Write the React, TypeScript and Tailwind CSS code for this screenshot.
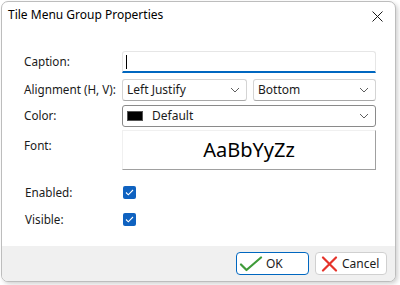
import React from 'react';

const font = { fontFamily: '"Noto Sans", "Open Sans", sans-serif' };

function Chevron() {
  return (
    <svg width="10" height="6" viewBox="0 0 10 6" className="shrink-0">
      <path d="M1 1l4 4 4-4" fill="none" stroke="#5f5f5f" strokeWidth="1" />
    </svg>
  );
}

function Select({ children, className = '' }: { children: React.ReactNode; className?: string }) {
  return (
    <div
      className={`flex h-[22px] items-center justify-between rounded-[3px] border border-[#d4d4d4] border-b-[#a8a8a8] bg-white pl-[4px] pr-[6px] ${className}`}
    >
      <span className="flex items-center">{children}</span>
      <Chevron />
    </div>
  );
}

function Check() {
  return (
    <div className="flex h-[13px] w-[13px] items-center justify-center rounded-[2px] bg-[#0f62c0]">
      <svg width="9" height="7" viewBox="0 0 9 7">
        <path d="M1 3.5l2.3 2.3L8 1" fill="none" stroke="white" strokeWidth="1.1" />
      </svg>
    </div>
  );
}

function Row({ label, children, className = '' }: { label: string; children: React.ReactNode; className?: string }) {
  return (
    <div className={`flex items-center ${className}`}>
      <span className="w-[98px] shrink-0 text-[11.7px] text-[#1b1b1b]">{label}</span>
      {children}
    </div>
  );
}

export default function App() {
  return (
    <div className="h-[285px] w-[400px] overflow-hidden bg-white" style={font}>
      <div className="ml-[1px] mt-[1px] flex h-[281px] w-[395px] flex-col overflow-hidden rounded-[7px] border border-[#bdbdbd] bg-white shadow-[2px_2px_4px_rgba(0,0,0,0.18)]">
        {/* title bar */}
        <div className="flex h-[30px] items-start justify-between pl-[6px] pr-[8px] pt-[4px]">
          <span className="text-[12px] text-black">Tile Menu Group Properties</span>
          <svg width="11" height="11" viewBox="0 0 11 11" className="mr-[4px] mt-[5px]">
            <path d="M0.5 0.5l10 10M10.5 0.5l-10 10" stroke="#1a1a1a" strokeWidth="1" />
          </svg>
        </div>

        {/* body */}
        <div className="flex flex-1 flex-col pl-[22px] pr-[19px] pt-[19px]">
          <Row label="Caption:">
            <div className="flex h-[22px] flex-1 items-center rounded-t-[3px] border border-[#e6e6e6] border-b-2 border-b-[#0067c0] pl-[3px]">
              <div className="h-[14px] w-[1px] bg-black" />
            </div>
          </Row>
          <Row label="Alignment (H, V):" className="mt-[6px]">
            <Select className="w-[125px] text-[12px] text-[#1b1b1b]">Left Justify</Select>
            <Select className="ml-[6px] flex-1 text-[12px] text-[#1b1b1b]">Bottom</Select>
          </Row>
          <Row label="Color:" className="mt-[4px]">
            <div className="flex h-[22px] flex-1 items-center justify-between rounded-[3px] border border-[#8a8a8a] bg-white pl-[4px] pr-[6px]">
              <span className="flex items-center text-[12px] text-[#1b1b1b]">
                <span className="mr-[9px] h-[10px] w-[16px] border border-[#555] bg-black" />
                Default
              </span>
              <Chevron />
            </div>
          </Row>
          <div className="mt-[3px] flex items-start">
            <span className="mt-[7px] w-[98px] shrink-0 text-[11.7px] text-[#1b1b1b]">Font:</span>
            <div className="flex h-[40px] flex-1 items-center justify-center border border-[#f0f0f0] border-b-[#a0a0a0] border-r-[#a0a0a0] bg-white">
              <span className="text-[20px] text-black">AaBbYyZz</span>
            </div>
          </div>
          <Row label="Enabled:" className="ml-[1px] mt-[14px]">
            <Check />
          </Row>
          <Row label="Visible:" className="ml-[1px] mt-[9px]">
            <Check />
          </Row>
        </div>

        {/* footer */}
        <div className="flex h-[35px] items-start justify-end gap-[6px] bg-[#f0f0f0] pr-[8px] pt-[6px]">
          <button className="flex h-[23px] w-[73px] items-center rounded-[4px] border border-[#0067c0] bg-white pl-[2px] text-[12px] text-[#1b1b1b]">
            <svg width="24" height="16" viewBox="0 0 24 16" className="mr-[3px]">
              <path d="M2 8.5l5.5 5.5L22 1.5" fill="none" stroke="#3f9b3a" strokeWidth="2.2" strokeLinecap="round" strokeLinejoin="round" />
            </svg>
            OK
          </button>
          <button className="flex h-[23px] w-[72px] items-center rounded-[4px] border border-[#d0d0d0] bg-white pl-[5px] text-[12px] text-[#1b1b1b]">
            <svg width="17" height="16" viewBox="0 0 17 16" className="mr-[4px]">
              <path d="M2 1.5l13 13M15 1.5l-13 13" fill="none" stroke="#e5332a" strokeWidth="2.2" strokeLinecap="round" />
            </svg>
            Cancel
          </button>
        </div>
      </div>
    </div>
  );
}
